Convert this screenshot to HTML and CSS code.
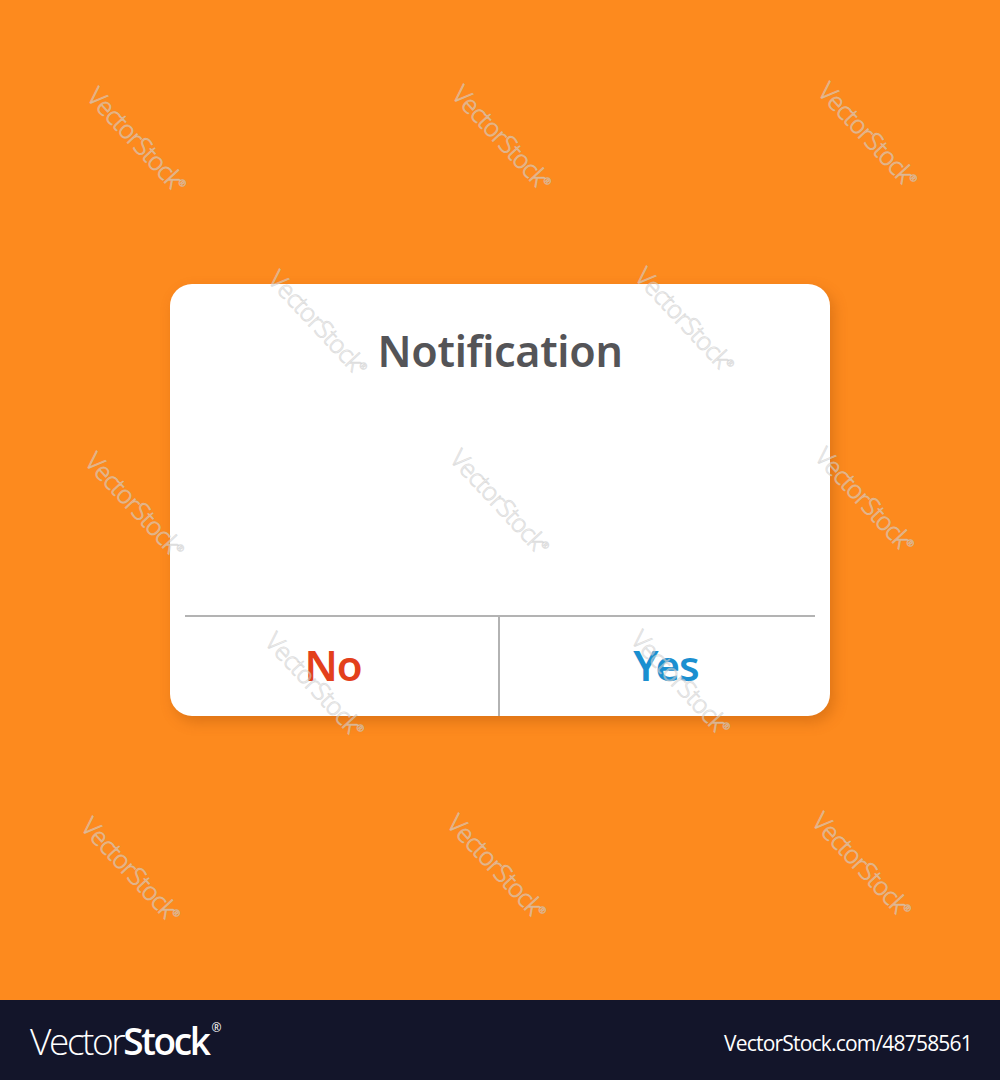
FILE: index.html
```html
<!DOCTYPE html>
<html>
<head>
<meta charset="utf-8">
<link rel="stylesheet" href="styles.css">
</head>
<body>
<div class="page">
  <main class="stage">
    <div class="card">
      <h1 class="title">Notification</h1>
      <div class="body"></div>
      <div class="actions">
        <button class="btn no">No</button>
        <button class="btn yes">Yes</button>
      </div>
    </div>
    <div class="marks">
      <span class="wm" style="left:72px;top:122px">VectorStock<sup>®</sup></span>
      <span class="wm" style="left:437px;top:120px">VectorStock<sup>®</sup></span>
      <span class="wm" style="left:803px;top:117px">VectorStock<sup>®</sup></span>
      <span class="wm" style="left:253px;top:305px">VectorStock<sup>®</sup></span>
      <span class="wm" style="left:620px;top:302px">VectorStock<sup>®</sup></span>
      <span class="wm" style="left:70px;top:487px">VectorStock<sup>®</sup></span>
      <span class="wm" style="left:435px;top:484px">VectorStock<sup>®</sup></span>
      <span class="wm" style="left:800px;top:482px">VectorStock<sup>®</sup></span>
      <span class="wm" style="left:250px;top:667px">VectorStock<sup>®</sup></span>
      <span class="wm" style="left:616px;top:665px">VectorStock<sup>®</sup></span>
      <span class="wm" style="left:66px;top:852px">VectorStock<sup>®</sup></span>
      <span class="wm" style="left:432px;top:849px">VectorStock<sup>®</sup></span>
      <span class="wm" style="left:797px;top:847px">VectorStock<sup>®</sup></span>
    </div>
  </main>
  <footer class="footer">
    <div class="logo"><span class="light">Vector</span><span class="bold">Stock</span><sup class="reg">®</sup></div>
    <div class="url">VectorStock.com/48758561</div>
  </footer>
</div>
</body>
</html>
```
FILE: styles.css
```css
* { box-sizing: border-box; }
html, body { margin: 0; padding: 0; }
body { width: 1000px; height: 1080px; overflow: hidden; font-family: "Open Sans", "DejaVu Sans", sans-serif; }
.page { display: flex; flex-direction: column; height: 1080px; }
.stage {
  position: relative;
  height: 1000px;
  background: #fd8a1e;
  display: flex;
  align-items: center;
  justify-content: center;
  overflow: hidden;
}
.card {
  width: 660px;
  height: 432px;
  background: #ffffff;
  border-radius: 22px;
  box-shadow: 4px 6px 14px rgba(140, 60, 0, 0.28);
  display: flex;
  flex-direction: column;
}
.title {
  margin: 0;
  padding-top: 38px;
  text-align: center;
  font-family: "Noto Sans", sans-serif;
  font-weight: 600;
  font-size: 43px;
  line-height: 58px;
  color: #545457;
  letter-spacing: -0.3px;
}
.body { flex: 1; }
.actions {
  margin: 0 15px;
  border-top: 2px solid #b3b3b3;
  height: 101px;
  display: grid;
  grid-template-columns: 1fr 1fr;
}
.btn {
  border: none;
  background: transparent;
  font-family: "Noto Sans", sans-serif;
  font-weight: 600;
  font-size: 42px;
  padding: 0 0 4px 0;
  letter-spacing: -1px;
}
.btn.no { color: #e3401b; border-right: 2px solid #b3b3b3; padding-right: 17px; }
.btn.yes { color: #1a8fd0; padding-left: 17px; }
.marks { position: absolute; inset: 0; pointer-events: none; }
.wm {
  position: absolute;
  font-family: "Open Sans", sans-serif;
  font-weight: 300;
  font-size: 25px;
  color: rgba(255,255,255,0.25);
  -webkit-text-stroke: 0.9px rgba(200, 200, 200, 0.6);
  transform: rotate(47deg);
  transform-origin: center;
  white-space: nowrap;
  letter-spacing: -0.8px;
}
.wm sup { font-size: 9px; }
.footer {
  height: 80px;
  background: #13152a;
  color: #ffffff;
  display: flex;
  align-items: center;
  justify-content: space-between;
  padding: 0 28px 0 30px;
}
.logo { font-family: "Open Sans", sans-serif; font-size: 37px; letter-spacing: -2.4px; line-height: 1; display: flex; align-items: flex-start; }
.logo .light { font-weight: 300; }
.logo .bold { font-weight: 600; }
.logo .reg { font-size: 12px; font-weight: 400; margin-left: 3px; letter-spacing: 0; }
.url { font-family: "Open Sans", sans-serif; font-size: 21px; letter-spacing: -0.8px; padding-top: 6px; }
```
